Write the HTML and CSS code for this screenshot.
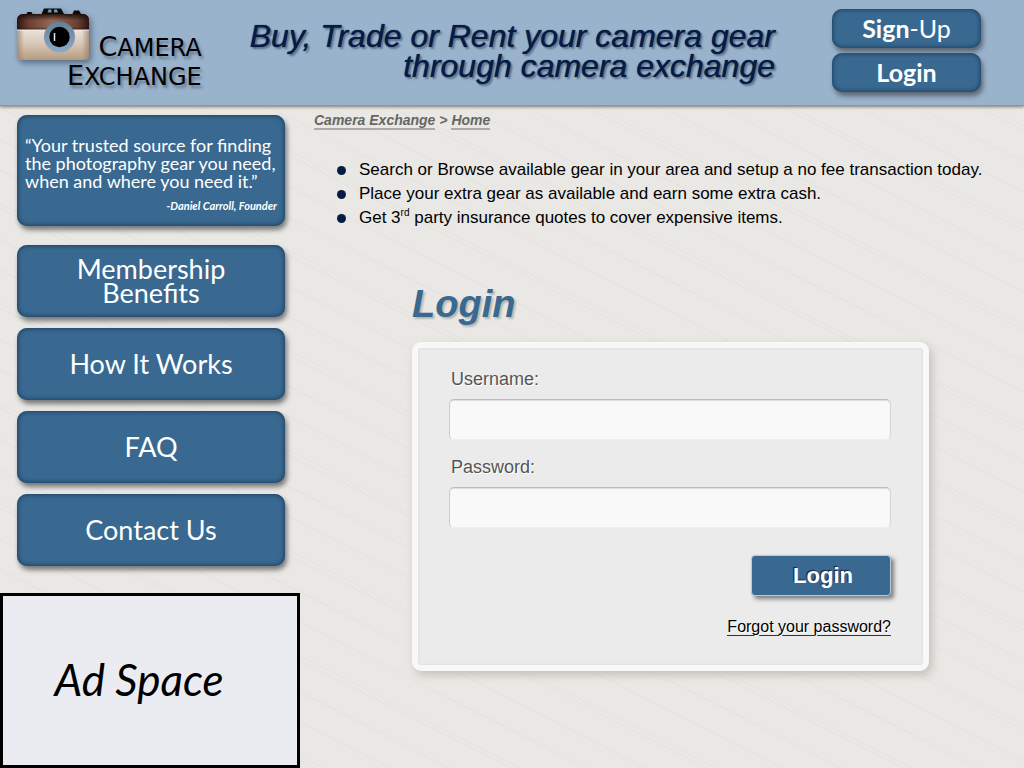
FILE: index.html
```html
<!DOCTYPE html>
<html lang="en">
<head>
<meta charset="utf-8">
<meta name="viewport" content="width=device-width, initial-scale=1">
<title>Camera Exchange - Login</title>
<link rel="stylesheet" href="styles.css">
</head>
<body>
<header class="header">
  <a class="logo" href="#">
    <svg class="logo-mark" viewBox="0 0 74 56" width="74" height="56" aria-hidden="true">
      <defs>
        <linearGradient id="leather" x1="0" y1="0" x2="1" y2="0">
          <stop offset="0" stop-color="#2c1510"/><stop offset=".16" stop-color="#6a4032"/><stop offset=".5" stop-color="#966a58"/><stop offset=".84" stop-color="#6a4032"/><stop offset="1" stop-color="#2c1510"/>
        </linearGradient>
        <linearGradient id="shade" x1="0" y1="0" x2="0" y2="1">
          <stop offset="0" stop-color="#160904" stop-opacity=".85"/><stop offset=".4" stop-color="#160904" stop-opacity="0"/><stop offset=".8" stop-color="#160904" stop-opacity="0"/><stop offset="1" stop-color="#160904" stop-opacity=".5"/>
        </linearGradient>
        <linearGradient id="case" x1="0" y1="0" x2="0" y2="1">
          <stop offset="0" stop-color="#e9e2dc"/><stop offset=".45" stop-color="#d8c8b9"/><stop offset="1" stop-color="#b69b7e"/>
        </linearGradient>
        <linearGradient id="edge" x1="0" y1="0" x2="1" y2="0">
          <stop offset="0" stop-color="#a08568" stop-opacity=".8"/><stop offset=".1" stop-color="#a08568" stop-opacity="0"/><stop offset=".9" stop-color="#a08568" stop-opacity="0"/><stop offset="1" stop-color="#a08568" stop-opacity=".8"/>
        </linearGradient>
        <linearGradient id="ring" x1="0" y1="0" x2="0" y2="1">
          <stop offset="0" stop-color="#627f98"/><stop offset="1" stop-color="#8dabc5"/>
        </linearGradient>
      </defs>
      <path d="M9.500 6l1-2h4l1 2zM55.500 6l1.500-3.500h5L64 6zM24.500 6l2.500-5.500h17l3 5.500z" fill="#080a0c"/>
      <path d="M31.500 1.500h3v3h-4zM37 1.500h3l1 3h-4z" fill="#7892a8"/>
      <path d="M0 22V11Q1 6 7 6H65q6 0 7 5V22z" fill="url(#leather)"/>
      <path d="M0 22V11Q1 6 7 6H65q6 0 7 5V22z" fill="url(#shade)"/>
      <path d="M0 22H72V47q0 5-5 5H5q-5 0-5-5z" fill="url(#case)"/>
      <path d="M0 22H72V47q0 5-5 5H5q-5 0-5-5z" fill="url(#edge)"/>
      <path d="M0 22H72" stroke="#f1e9ea"/>
      <circle cx="42.500" cy="29" r="15.500" fill="url(#ring)"/>
      <circle cx="42.500" cy="29" r="10.200" fill="#000"/>
      <path d="M37.500 25v8" stroke="#e8e8e8" stroke-width="1.500"/>
    </svg>
    <span class="logo-name"><span class="cap">C</span>AMERA<br><span class="cap">E</span>XCHANGE</span>
  </a>
  <p class="tagline">Buy, Trade or Rent your camera gear<br>through camera exchange</p>
  <div class="account">
    <button class="tile account-button" type="button"><b>Sign</b>-Up</button>
    <button class="tile account-button" type="button"><b>Login</b></button>
  </div>
</header>
<div class="page">
  <aside class="sidebar">
    <blockquote class="tile quote">
      <p class="quote-text">“Your trusted source for finding<br>the photography gear you need,<br>when and where you need it.”</p>
      <footer class="quote-author">-Daniel Carroll, Founder</footer>
    </blockquote>
    <nav class="nav">
      <a class="tile nav-link" href="#">Membership<br>Benefits</a>
      <a class="tile nav-link" href="#">How It Works</a>
      <a class="tile nav-link" href="#">FAQ</a>
      <a class="tile nav-link" href="#">Contact Us</a>
    </nav>
    <div class="ad">Ad Space</div>
  </aside>
  <main class="main">
    <nav class="crumbs"><a href="#">Camera Exchange</a> &gt; <a href="#">Home</a></nav>
    <ul class="points">
      <li>Search or Browse available gear in your area and setup a no fee transaction today.</li>
      <li>Place your extra gear as available and earn some extra cash.</li>
      <li>Get 3<sup>rd</sup> party insurance quotes to cover expensive items.</li>
    </ul>
    <section class="login">
      <h1 class="login-title">Login</h1>
      <form class="panel">
        <label class="label" for="username">Username:</label>
        <input class="field" id="username" type="text">
        <label class="label" for="password">Password:</label>
        <input class="field" id="password" type="password">
        <button class="submit" type="button">Login</button>
        <a class="forgot" href="#">Forgot your password?</a>
      </form>
    </section>
  </main>
</div>
</body>
</html>
```
FILE: styles.css
```css
* {
  box-sizing: border-box;
}

body {
  margin: 0;
  min-height: 100vh;
  display: flex;
  flex-direction: column;
  font-family: "Liberation Sans", Arial, sans-serif;
  color: #000;
  background-color: #e9e8e4;
  background-image: repeating-linear-gradient(27deg,
    transparent 0 25px, #e3e2de 26px, transparent 27px 53px,
    #e3e2de 54px, transparent 55px 57px,
    #e4e3df 58px, transparent 59px 87px,
    #e3e2de 88px, transparent 89px);
}

p, h1, ul, blockquote {
  margin: 0;
  padding: 0;
}

a {
  color: inherit;
}

.header {
  display: flex;
  align-items: flex-start;
  min-height: 106px;
  padding: 8px 43px 0 17px;
  background: #9ab3cc;
  border-bottom: 1px solid #8f9499;
  box-shadow: 0 1px 3px rgba(60, 50, 40, .6);
}

.logo {
  display: flex;
  align-items: flex-start;
  text-decoration: none;
}

.logo-mark {
  filter: drop-shadow(2px 3px 3px rgba(40, 60, 80, .6));
}

.logo-name {
  margin: 25px 0 0 -24px;
  font-family: "DejaVu Sans", sans-serif;
  font-size: 24px;
  line-height: 28px;
  text-align: right;
  text-shadow: 2px 3px 3px rgba(40, 60, 80, .5);
}

.cap {
  font-size: 27px;
}

.tagline {
  flex: 1;
  padding-top: 13px;
  font-size: 32px;
  line-height: 30px;
  font-style: italic;
  text-align: right;
  white-space: nowrap;
  color: #071c45;
  text-shadow: 0 0 1px #071c45, 2px 2px 2px rgba(40, 55, 75, .55);
}

.tile {
  border: 0;
  border-radius: 10px;
  background: #396991;
  color: #fff;
  font-family: Lato, sans-serif;
  text-align: center;
  text-decoration: none;
  box-shadow: inset 0 0 4px 1px #1e4161, 2px 4px 5px rgba(60, 60, 65, .65);
}

.account {
  display: grid;
  gap: 5px;
  width: 149px;
  margin: 1px 0 0 57px;
}

.account-button {
  height: 39px;
  padding: 0 0 2px;
  font-size: 25px;
}

.page {
  flex: 1;
  display: grid;
  grid-template-columns: 300px 1fr;
}

.sidebar {
  display: flex;
  flex-direction: column;
  padding-top: 9px;
}

.quote {
  margin: 0 15px 19px 17px;
  padding: 21px 8px 12px;
  text-align: left;
}

.quote-text {
  font-size: 18px;
  line-height: 18px;
  white-space: nowrap;
}

.quote-author {
  padding-top: 8px;
  font-size: 11px;
  line-height: 16px;
  font-weight: 700;
  font-style: italic;
  text-align: right;
}

.nav {
  display: grid;
  gap: 11px;
  margin: 0 15px 27px 17px;
}

.nav-link {
  display: grid;
  place-content: center;
  min-height: 72px;
  font-size: 27px;
  line-height: 24px;
}

.ad {
  flex: 1;
  display: grid;
  place-content: center;
  min-height: 174px;
  padding: 0 22px 4px 0;
  border: 3px solid #000;
  background: #ebecf2;
  font-family: Lato, sans-serif;
  font-size: 44px;
  line-height: 48px;
  font-style: italic;
}

.main {
  padding: 6px 14px 24px;
}

.crumbs {
  font-size: 14px;
  line-height: 16px;
  font-weight: 700;
  font-style: italic;
  color: #666;
}

.crumbs a {
  display: inline-block;
  text-decoration: none;
  border-bottom: 2px solid #aaa;
}

.points {
  margin-top: 28px;
  padding-left: 23px;
  list-style: none;
  font-size: 17px;
  line-height: 24px;
}

.points li::before {
  content: "";
  display: inline-block;
  width: 9px;
  height: 9px;
  margin-right: 13px;
  border-radius: 50%;
  background: #071c45;
}

.points sup {
  font-size: 10px;
  line-height: 10px;
}

.login {
  width: 517px;
  max-width: 100%;
  margin: 52px 81px 0 auto;
}

.login-title {
  margin-bottom: 16px;
  font-size: 38px;
  line-height: 44px;
  font-style: italic;
  color: #396991;
  text-shadow: 2px 2px 2px rgba(90, 90, 90, .35);
}

.panel {
  display: flex;
  flex-direction: column;
  padding: 20px 32px 29px 31px;
  border: 6px solid #f8f8f8;
  border-radius: 9px;
  background: #ebebeb;
  box-shadow: 3px 4px 8px rgba(120, 100, 90, .3), inset 0 0 2px 1px #e0e0e0;
}

.label {
  padding: 0 2px;
  font-size: 18px;
  line-height: 22px;
  color: #555;
  text-shadow: 1px 1px 0 #fff;
}

.field {
  width: 100%;
  height: 41px;
  margin: 9px 0 16px;
  padding: 0 10px;
  border: 1px solid;
  border-color: #bcbcbc #d4d4d4 #eee #cfcfcf;
  border-radius: 5px;
  background: #f9f9f9;
  box-shadow: inset 0 1px 1px #ddd;
  font-size: 18px;
}

.submit {
  align-self: flex-end;
  width: 140px;
  height: 41px;
  margin-top: 11px;
  padding: 0 0 0 4px;
  border: 1px solid #b9cad8;
  border-radius: 4px;
  background: #396991;
  color: #fff;
  font: 700 22px "Liberation Sans", Arial, sans-serif;
  text-shadow: -1px -1px 1px #102438;
  box-shadow: 3px 3px 4px rgba(50, 50, 50, .6);
}

.forgot {
  align-self: flex-end;
  margin-top: 22px;
  font-size: 16px;
  line-height: 17px;
  text-decoration: none;
  border-bottom: 1px solid #333;
  text-shadow: 1px 1px 0 #fff;
}
```
